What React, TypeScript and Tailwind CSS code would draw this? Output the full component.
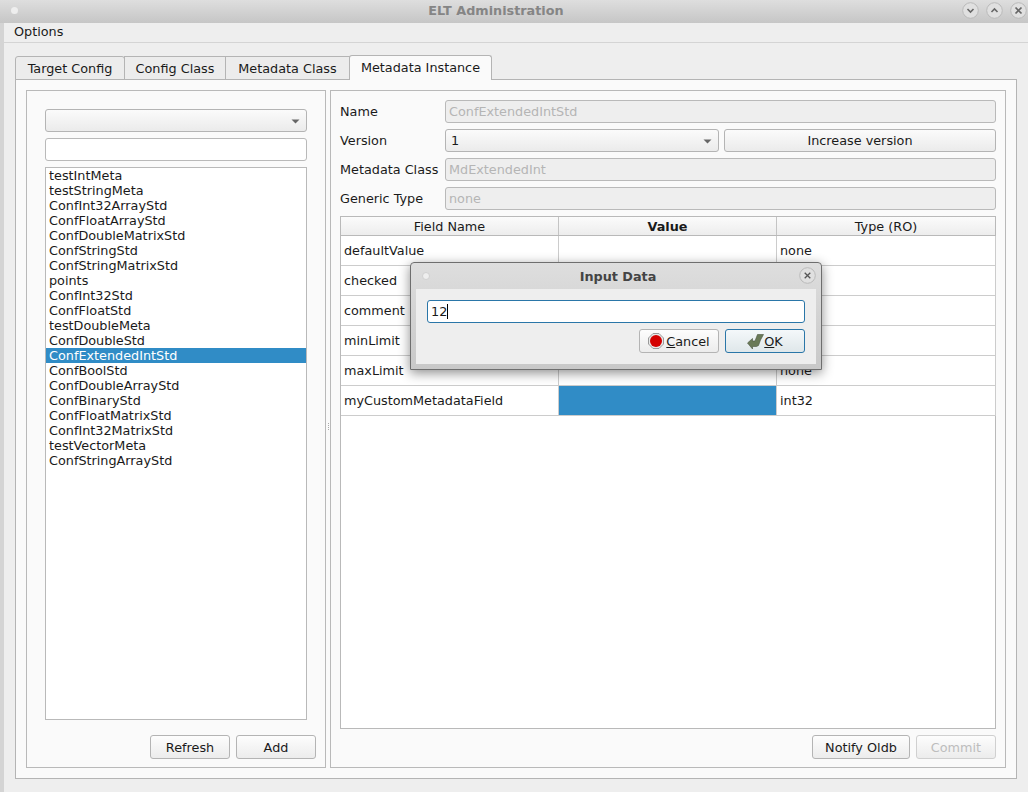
import React from "react";

const items = ["testIntMeta","testStringMeta","ConfInt32ArrayStd","ConfFloatArrayStd","ConfDoubleMatrixStd","ConfStringStd","ConfStringMatrixStd","points","ConfInt32Std","ConfFloatStd","testDoubleMeta","ConfDoubleStd","ConfExtendedIntStd","ConfBoolStd","ConfDoubleArrayStd","ConfBinaryStd","ConfFloatMatrixStd","ConfInt32MatrixStd","testVectorMeta","ConfStringArrayStd"];
const rows: [string, string][] = [["defaultValue","none"],["checked","none"],["comment","none"],["minLimit","none"],["maxLimit","none"],["myCustomMetadataField","int32"]];

function Arrow() {
  return <svg width="9" height="5" viewBox="0 0 9 5" className="absolute right-[6px] top-[9px]"><path d="M0.5 0.5H8.5L4.5 4.5Z" fill="#666666" /></svg>;
}

function Btn({ w, children, disabled }: { w: string; children: React.ReactNode; disabled?: boolean }) {
  return (
    <div className={`${w} h-[24px] flex items-center justify-center rounded-[3px] border bg-gradient-to-b from-[#fdfdfd] to-[#ececec] ${disabled ? "text-[#bdbdbd] border-[#d0d0d0]" : "text-[#1a1a1a] border-[#b4b4b4]"}`}>
      {children}
    </div>
  );
}

function Dis({ text }: { text: string }) {
  return <div className="h-[23px] flex-1 rounded-[3px] border border-[#b9b9b9] bg-[#eeeeee] pl-[3px] flex items-center text-[#b5b5b5]">{text}</div>;
}

function FormRow({ label, children }: { label: string; children: React.ReactNode }) {
  return (
    <div className="flex items-center h-[23px]">
      <div className="w-[105px] shrink-0 text-[#1a1a1a]">{label}</div>
      {children}
    </div>
  );
}

function WinBtn({ children }: { children: React.ReactNode }) {
  return (
    <svg width="17" height="17" viewBox="0 0 17 17">
      <circle cx="8.5" cy="8.5" r="7.8" fill="#e0e0e0" stroke="#bababa" strokeWidth="1" />
      {children}
    </svg>
  );
}

export default function App() {
  return (
    <div className="relative w-[1028px] h-[792px] overflow-hidden bg-[#eeeeee] flex flex-col text-[12.8px] leading-[15px]" style={{ fontFamily: '"DejaVu Sans", sans-serif' }}>
      <div className="h-[23px] shrink-0 relative flex items-center justify-center pr-[36px] pb-[2px] bg-gradient-to-b from-[#dedede] to-[#c6c6c6]">
        <div className="absolute left-[11px] top-[7px] w-[7px] h-[7px] rounded-full bg-[#eeeeee]" />
        <span className="font-bold text-[#858585]">ELT Administration</span>
        <div className="absolute right-[1px] top-[2px] flex gap-[7px]">
          <WinBtn><path d="M5.5 7L8.5 10L11.5 7" fill="none" stroke="#666" strokeWidth="1.6" /></WinBtn>
          <WinBtn><path d="M5.5 10L8.5 7L11.5 10" fill="none" stroke="#666" strokeWidth="1.6" /></WinBtn>
          <WinBtn><path d="M5.5 5.5L11.5 11.5M11.5 5.5L5.5 11.5" fill="none" stroke="#666" strokeWidth="1.7" /></WinBtn>
        </div>
      </div>
      <div className="flex-1 flex flex-col border-l-4 border-[#d4d4d4] min-h-0">
        <div className="h-[20px] shrink-0 border-b border-[#d4d4d4] pl-[10px] pb-[2px] flex items-center text-[#1a1a1a]">Options</div>
        <div className="pl-[11px] pr-[11px] pt-[11px] flex flex-col flex-1 min-h-0 pb-[13px]">
          <div className="flex items-end h-[25px] relative z-10 shrink-0">
            <div className="w-[110px] h-[24px] -mb-px bg-[#ececec] border border-[#b4b4b4] rounded-t-[3px] flex items-center justify-center text-[#1a1a1a]">Target Config</div>
            <div className="w-[102px] h-[24px] -mb-px -ml-px bg-[#ececec] border border-[#b4b4b4] flex items-center justify-center text-[#1a1a1a]">Config Class</div>
            <div className="w-[125px] h-[24px] -mb-px -ml-px bg-[#ececec] border border-[#b4b4b4] flex items-center justify-center text-[#1a1a1a]">Metadata Class</div>
            <div className="w-[143px] h-[25px] -ml-px -mb-px bg-[#fafafa] border border-[#b4b4b4] border-b-0 rounded-t-[3px] flex items-center justify-center pb-[2px] text-[#1a1a1a]">Metadata Instance</div>
          </div>
          <div className="flex-1 min-h-0 bg-[#fafafa] border border-[#b4b4b4] p-[10px] flex gap-[4px]">
            <div className="w-[300px] shrink-0 border border-[#b9b9b9] flex flex-col pl-[18px] pr-[9px] pt-[18px] pb-[8px]">
              <div className="relative w-[262px] h-[23px] rounded-[3px] border border-[#b4b4b4] bg-gradient-to-b from-[#fbfbfb] to-[#ebebeb]"><Arrow /></div>
              <div className="w-[262px] h-[23px] mt-[6px] rounded-[3px] border border-[#b9b9b9] bg-white" />
              <div className="w-[262px] flex-1 mt-[6px] border border-[#b9b9b9] bg-white text-[#1a1a1a]">
                {items.map((t) => (
                  <div key={t} className={`h-[15px] pl-[3px] leading-[15px] whitespace-nowrap ${t === "ConfExtendedIntStd" ? "bg-[#308cc6] text-white" : ""}`}>{t}</div>
                ))}
              </div>
              <div className="flex justify-end gap-[6px] mt-[15px]">
                <Btn w="w-[80px]">Refresh</Btn>
                <Btn w="w-[80px]">Add</Btn>
              </div>
            </div>
            <div className="flex-1 border border-[#b9b9b9] flex flex-col pl-[9px] pr-[9px] pt-[9px] pb-[8px] min-w-0 relative">
              <div className="absolute -left-[3px] top-[332px] flex flex-col gap-[1px]">
                <i className="w-px h-px bg-[#aaaaaa]" /><i className="w-px h-px bg-[#aaaaaa]" /><i className="w-px h-px bg-[#aaaaaa]" /><i className="w-px h-px bg-[#aaaaaa]" />
              </div>
              <div className="flex flex-col gap-[6px]">
                <FormRow label="Name"><Dis text="ConfExtendedIntStd" /></FormRow>
                <FormRow label="Version">
                  <div className="relative w-[274px] h-[23px] rounded-[3px] border border-[#b4b4b4] bg-gradient-to-b from-[#fbfbfb] to-[#ebebeb] pl-[5px] flex items-center text-[#1a1a1a]">1<Arrow /></div>
                  <div className="ml-[5px] flex-1 h-[23px] rounded-[3px] border border-[#b4b4b4] bg-gradient-to-b from-[#fbfbfb] to-[#ebebeb] flex items-center justify-center text-[#1a1a1a]">Increase version</div>
                </FormRow>
                <FormRow label="Metadata Class"><Dis text="MdExtendedInt" /></FormRow>
                <FormRow label="Generic Type"><Dis text="none" /></FormRow>
              </div>
              <div className="mt-[6px] flex-1 border border-[#b9b9b9] bg-white min-h-0 text-[#1a1a1a]">
                <div className="grid grid-cols-[218px_218px_218px] h-[19px] border-b border-[#b9b9b9] bg-gradient-to-b from-[#fbfbfb] to-[#ededed]">
                  <div className="border-r border-[#c4c4c4] flex items-center justify-center">Field Name</div>
                  <div className="border-r border-[#c4c4c4] flex items-center justify-center font-bold">Value</div>
                  <div className="flex items-center justify-center">Type (RO)</div>
                </div>
                {rows.map(([a, b], i) => (
                  <div key={a} className="grid grid-cols-[218px_218px_219px] h-[30px] border-b border-[#cccccc] w-[655px]">
                    <div className="border-r border-[#cccccc] pl-[3px] flex items-center">{a}</div>
                    <div className={`border-r border-[#cccccc] ${i === 5 ? "bg-[#308cc6]" : ""}`} />
                    <div className="border-r border-[#cccccc] pl-[3px] flex items-center">{b}</div>
                  </div>
                ))}
              </div>
              <div className="flex justify-end gap-[6px] mt-[6px]">
                <Btn w="w-[98px]">Notify Oldb</Btn>
                <Btn w="w-[80px]" disabled>Commit</Btn>
              </div>
            </div>
          </div>
        </div>
      </div>

      <div className="absolute left-[410px] top-[262px] w-[412px] h-[108px] rounded-t-[4px] border border-[#6e6e6e] bg-gradient-to-b from-[#dedede] to-[#c8c8c8] shadow-[0_3px_12px_rgba(0,0,0,0.45)] flex flex-col">
        <div className="h-[26px] shrink-0 relative flex items-center justify-center pl-[4px]">
          <div className="absolute left-[11px] top-[9px] w-[8px] h-[8px] rounded-full bg-[#eeeeee] border border-[#d0d0d0]" />
          <span className="font-bold text-[#444444]">Input Data</span>
          <div className="absolute right-[5px] top-[4px] flex">
            <WinBtn><path d="M5.7 5.7L11.3 11.3M11.3 5.7L5.7 11.3" fill="none" stroke="#555" strokeWidth="1.3" /></WinBtn>
          </div>
        </div>
        <div className="flex-1 mx-[5px] mb-[5px] bg-[#eeeeee] px-[11px] pt-[11px] text-[#1a1a1a]">
          <div className="h-[23px] rounded-[3px] border border-[#2a76a8] bg-white pl-[3px] flex items-center"><span>12</span><span className="w-px h-[15px] bg-black" /></div>
          <div className="flex justify-end gap-[6px] mt-[6px]">
            <Btn w="w-[80px]">
              <svg width="16" height="16" viewBox="0 0 16 16" className="mr-[2px]"><path d="M5 0.5H11L15.5 5V11L11 15.5H5L0.5 11V5Z" fill="#e8e8e8" stroke="#9a9a9a" /><circle cx="8" cy="8" r="6" fill="#d40000" /></svg>
              <span><span className="underline">C</span>ancel</span>
            </Btn>
            <div className="w-[80px] h-[24px] flex items-center justify-center rounded-[3px] border border-[#2a76a8] bg-gradient-to-b from-[#f4f8fa] to-[#dfe7ea] text-[#1a1a1a]">
              <svg width="17" height="17" viewBox="0 0 17 17"><path d="M0.5 10L5.5 5.5V8H8L10.5 1.5H16.5L13.5 7L11.5 12.5L9.5 13.5H5.5V16Z" fill="#6a7a58" stroke="#4a5540" strokeWidth="0.6" strokeLinejoin="round" /></svg>
              <span><span className="underline">O</span>K</span>
            </div>
          </div>
        </div>
      </div>
    </div>
  );
}
